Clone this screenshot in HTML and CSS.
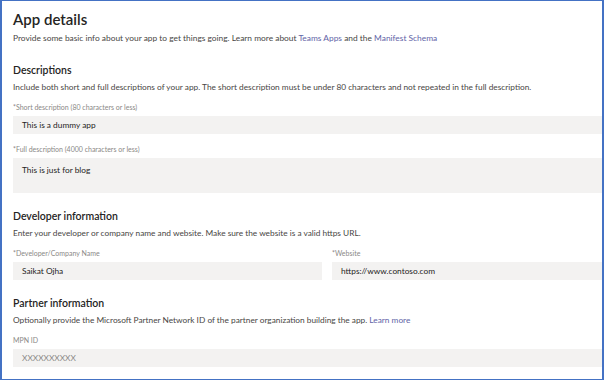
FILE: index.html
```html
<!DOCTYPE html>
<html lang="en">
<head>
    <meta charset="UTF-8">
    <meta name="viewport" content="width=device-width, initial-scale=1.0">
    <title>App details</title>
    <link rel="stylesheet" href="styles.css">
</head>
<body>
<div class="frame">
    <h1 class="page-title">App details</h1>
    <p class="intro">Provide some basic info about your app to get things going. Learn more about <a class="link">Teams Apps</a> and the <a class="link">Manifest Schema</a></p>

    <h2 class="section-title first">Descriptions</h2>
    <p class="hint">Include both short and full descriptions of your app. The short description must be under 80 characters and not repeated in the full description.</p>

    <p class="label">*Short description (80 characters or less)</p>
    <div class="field">This is a dummy app</div>

    <p class="label">*Full description (4000 characters or less)</p>
    <div class="field field-big">This is just for blog</div>

    <h2 class="section-title">Developer information</h2>
    <p class="hint">Enter your developer or company name and website. Make sure the website is a valid https URL.</p>

    <div class="two-cols">
        <div>
            <p class="label">*Developer/Company Name</p>
            <div class="field">Saikat Ojha</div>
        </div>
        <div>
            <p class="label">*Website</p>
            <div class="field">https://www.contoso.com</div>
        </div>
    </div>

    <h2 class="section-title">Partner information</h2>
    <p class="hint">Optionally provide the Microsoft Partner Network ID of the partner organization building the app. <a class="link">Learn more</a></p>

    <p class="label">MPN ID</p>
    <div class="field placeholder">XXXXXXXXXX</div>
</div>
</body>
</html>
```

FILE: styles.css
```css
body
{
    margin:0;
    background-color:white;
    font-family:Lato, "Open Sans", Arial, sans-serif;
    color:#252423;
}
.frame
{
    width:604px;
    height:380px;
    box-sizing:border-box;
    border:1px solid #4472c4;
    border-left-width:2px;
    border-right-width:2px;
    padding:8px 0 0 11px;
    overflow:hidden;
}
.page-title
{
    margin:0;
    font-size:15px;
    font-weight:600;
    line-height:20px;
}
.intro
{
    margin:3px 0 0 0;
    font-size:8.4px;
    line-height:12px;
    color:#484644;
}
.link
{
    color:#6264a7;
}
.section-title
{
    margin:16px 0 0 0;
    font-size:10.5px;
    font-weight:600;
    line-height:14px;
}
.section-title.first
{
    margin-top:18.5px;
}
.hint
{
    margin:4px 0 0 0;
    font-size:8.3px;
    line-height:12px;
    color:#484644;
}
.label
{
    margin:9px 0 0 0;
    font-size:7px;
    line-height:10px;
    color:#8a8886;
}
.field
{
    margin-top:4px;
    height:18px;
    padding-left:9px;
    background-color:#f3f2f1;
    font-size:8.3px;
    line-height:18px;
    color:#252423;
}
.field + .label
{
    margin-top:10px;
}
.field-big
{
    height:35px;
    line-height:25px;
}
.placeholder
{
    color:#8a8886;
}
.two-cols
{
    display:grid;
    grid-template-columns:309px 1fr;
    gap:10px;
}
```
